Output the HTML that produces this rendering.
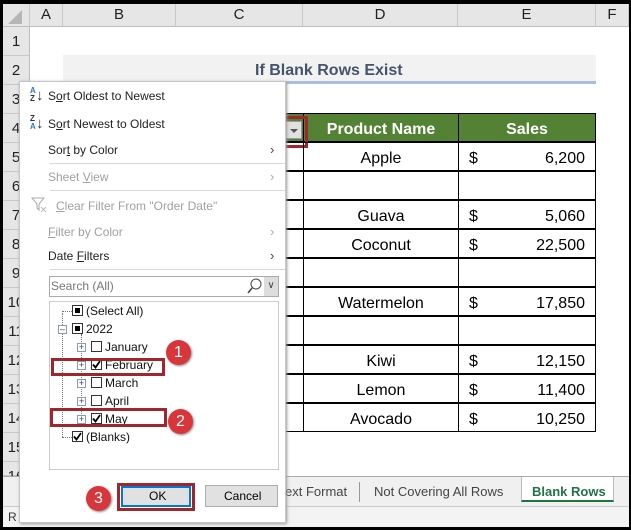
<!DOCTYPE html>
<html><head><style>
*{margin:0;padding:0;box-sizing:border-box}
body{width:631px;height:530px;background:#000;position:relative;overflow:hidden;font-family:"Liberation Sans",sans-serif}
.a{position:absolute}
.t{position:absolute;white-space:nowrap}
.hd{background:#e6e6e6;color:#222;font-size:15px;text-align:center;line-height:22px;top:4px;height:23px;border-right:1px solid #c8c8c8;border-bottom:1px solid #bdbdbd}
.rn{left:3px;width:27px;height:29px;background:#e6e6e6;border-bottom:1px solid #c8c8c8;border-right:1px solid #bdbdbd;font-size:15px;color:#222;text-align:center;line-height:29px}
.cell{position:absolute;height:29px;border:1px solid #000;font-size:16px;line-height:31px;color:#000}
.mi{position:absolute;left:48px;font-size:12px;color:#222}
.dis{color:#a0a0a0}
.arr{position:absolute;left:270px;font-size:13px;color:#444}
.sep{position:absolute;left:50px;width:235px;height:1px;background:#d8d8d8}
.li{position:absolute;font-size:12px;color:#111}
.cb{position:absolute;width:11px;height:11px;border:1px solid #333;background:#fff}
.fill::after{content:"";position:absolute;left:2px;top:2px;width:5px;height:5px;background:#000}
.cb svg{position:absolute;left:0;top:0}
.pl{position:absolute;width:9px;height:9px;border:1px solid #8a9ab5;background:#fff;font-size:9px;line-height:7px;text-align:center;color:#233e8b}
.red{position:absolute;border:3px solid #a0262b}
.badge{position:absolute;width:25px;height:25px;border-radius:50%;background:#d9363c;color:#fff;font-size:16px;text-align:center;line-height:25px;box-shadow:1px 1px 2px #888}
</style></head><body>
<div class="a" style="left:3px;top:4px;width:626px;height:523px;background:#fff"></div>
<div class="a hd" style="left:3px;width:27px"></div>
<div class="a" style="left:8px;top:10px;width:0;height:0;border-left:14px solid transparent;border-bottom:14px solid #b5b5b5"></div>
<div class="a hd" style="left:30px;width:33px">A</div>
<div class="a hd" style="left:63px;width:113px">B</div>
<div class="a hd" style="left:176px;width:127px">C</div>
<div class="a hd" style="left:303px;width:155px">D</div>
<div class="a hd" style="left:458px;width:138px">E</div>
<div class="a hd" style="left:596px;width:33px">F</div>
<div class="a rn" style="top:27px">1</div>
<div class="a rn" style="top:56px">2</div>
<div class="a rn" style="top:85px">3</div>
<div class="a rn" style="top:114px">4</div>
<div class="a rn" style="top:143px">5</div>
<div class="a rn" style="top:172px">6</div>
<div class="a rn" style="top:201px">7</div>
<div class="a rn" style="top:230px">8</div>
<div class="a rn" style="top:259px">9</div>
<div class="a rn" style="top:288px">10</div>
<div class="a rn" style="top:317px">11</div>
<div class="a rn" style="top:346px">12</div>
<div class="a rn" style="top:375px">13</div>
<div class="a rn" style="top:404px">14</div>
<div class="a rn" style="top:433px">15</div>
<div class="a rn" style="top:462px;height:14px">16</div>
<div class="a" style="left:63px;top:55px;width:533px;height:29px;background:#f2f2f2;border-bottom:3px solid #a9bde0"></div>
<div class="t" style="left:255px;top:62px;font-size:16px;font-weight:bold;color:#44546a">If Blank Rows Exist</div>
<div class="cell" style="left:303px;top:113px;width:156px;background:#548235;color:#fff;font-weight:bold;text-align:center">Product Name</div>
<div class="cell" style="left:458px;top:113px;width:138px;background:#548235;color:#fff;font-weight:bold;text-align:center">Sales</div>
<div class="cell" style="left:240px;top:113px;width:64px;background:#548235"></div>
<div class="a" style="left:284px;top:121px;width:18px;height:18px;background:#e1e1e1;border:1px solid #999"></div>
<div class="a" style="left:290px;top:129px;border-left:4px solid transparent;border-right:4px solid transparent;border-top:4px solid #555"></div>
<div class="red" style="left:280px;top:116px;width:28px;height:32px"></div>
<div class="cell" style="left:240px;top:142px;width:64px"></div>
<div class="cell" style="left:303px;top:142px;width:156px;text-align:center">Apple</div>
<div class="cell" style="left:458px;top:142px;width:138px;padding:0 10px"><span>$</span><span style="float:right">6,200</span></div>
<div class="cell" style="left:240px;top:171px;width:64px"></div>
<div class="cell" style="left:303px;top:171px;width:156px"></div>
<div class="cell" style="left:458px;top:171px;width:138px"></div>
<div class="cell" style="left:240px;top:200px;width:64px"></div>
<div class="cell" style="left:303px;top:200px;width:156px;text-align:center">Guava</div>
<div class="cell" style="left:458px;top:200px;width:138px;padding:0 10px"><span>$</span><span style="float:right">5,060</span></div>
<div class="cell" style="left:240px;top:229px;width:64px"></div>
<div class="cell" style="left:303px;top:229px;width:156px;text-align:center">Coconut</div>
<div class="cell" style="left:458px;top:229px;width:138px;padding:0 10px"><span>$</span><span style="float:right">22,500</span></div>
<div class="cell" style="left:240px;top:258px;width:64px"></div>
<div class="cell" style="left:303px;top:258px;width:156px"></div>
<div class="cell" style="left:458px;top:258px;width:138px"></div>
<div class="cell" style="left:240px;top:287px;width:64px"></div>
<div class="cell" style="left:303px;top:287px;width:156px;text-align:center">Watermelon</div>
<div class="cell" style="left:458px;top:287px;width:138px;padding:0 10px"><span>$</span><span style="float:right">17,850</span></div>
<div class="cell" style="left:240px;top:316px;width:64px"></div>
<div class="cell" style="left:303px;top:316px;width:156px"></div>
<div class="cell" style="left:458px;top:316px;width:138px"></div>
<div class="cell" style="left:240px;top:345px;width:64px"></div>
<div class="cell" style="left:303px;top:345px;width:156px;text-align:center">Kiwi</div>
<div class="cell" style="left:458px;top:345px;width:138px;padding:0 10px"><span>$</span><span style="float:right">12,150</span></div>
<div class="cell" style="left:240px;top:374px;width:64px"></div>
<div class="cell" style="left:303px;top:374px;width:156px;text-align:center">Lemon</div>
<div class="cell" style="left:458px;top:374px;width:138px;padding:0 10px"><span>$</span><span style="float:right">11,400</span></div>
<div class="cell" style="left:240px;top:403px;width:64px"></div>
<div class="cell" style="left:303px;top:403px;width:156px;text-align:center">Avocado</div>
<div class="cell" style="left:458px;top:403px;width:138px;padding:0 10px"><span>$</span><span style="float:right">10,250</span></div>
<div class="a" style="left:3px;top:476px;width:626px;height:30px;background:#f0f0f0;border-top:1px solid #c6c6c6"></div>
<div class="a" style="left:3px;top:476px;width:626px;height:1px;background:#aaa"></div>
<div class="t" style="left:285px;top:484px;font-size:13px;color:#444">ext Format</div>
<div class="a" style="left:359px;top:482px;width:1px;height:20px;background:#999"></div>
<div class="t" style="left:374px;top:484px;font-size:13px;color:#444">Not Covering All Rows</div>
<div class="a" style="left:521px;top:477px;width:93px;height:25px;background:#fff;border-bottom:2px solid #217346;border-left:1px solid #bbb;border-right:1px solid #bbb"></div>
<div class="t" style="left:532px;top:484px;font-size:13px;font-weight:bold;color:#217346">Blank Rows</div>
<div class="a" style="left:3px;top:506px;width:626px;height:21px;background:#f3f3f3;border-top:1px solid #ccc"></div>
<div class="t" style="left:8px;top:510px;font-size:12px;color:#333">R</div>
<div class="a" style="left:19px;top:81px;width:267px;height:442px;background:#fff;border:1px solid #c6c6c6;box-shadow:1px 1px 3px #999"></div>
<div class="t" style="left:30px;top:87px;font-size:8px;font-weight:bold;color:#2b79d0;line-height:8px">A<br><span style="color:#333">Z</span></div>
<div class="t" style="left:36px;top:87px;font-size:15px;color:#333">↓</div>
<div class="mi" style="top:89px">S<u>o</u>rt Oldest to Newest</div>
<div class="t" style="left:30px;top:115px;font-size:8px;font-weight:bold;color:#333;line-height:8px">Z<br><span style="color:#2b79d0">A</span></div>
<div class="t" style="left:36px;top:115px;font-size:15px;color:#333">↓</div>
<div class="mi" style="top:117px">S<u>o</u>rt Newest to Oldest</div>
<div class="mi" style="top:143px">Sor<u>t</u> by Color</div><div class="arr" style="top:142px">&#x203A;</div>
<div class="sep" style="top:163px"></div>
<div class="mi dis" style="top:170px">Sheet <u>V</u>iew</div><div class="arr dis" style="top:169px;color:#aaa">&#x203A;</div>
<div class="sep" style="top:190px"></div>
<svg class="a" style="left:31px;top:197px" width="16" height="16"><path d="M1 1h12l-5 6v6l-2-2V7z" fill="none" stroke="#aaa"/><path d="M10 10l5 5M15 10l-5 5" stroke="#bbb"/></svg>
<div class="mi dis" style="left:56px;top:199px"><u>C</u>lear Filter From "Order Date"</div>
<div class="mi dis" style="top:225px"><u>F</u>ilter by Color</div><div class="arr" style="top:224px;color:#aaa">&#x203A;</div>
<div class="mi" style="top:249px">Date <u>F</u>ilters</div><div class="arr" style="top:248px">&#x203A;</div>
<div class="sep" style="top:269px"></div>
<div class="a" style="left:49px;top:276px;width:230px;height:21px;border:1px solid #aaa"></div>
<div class="t" style="left:51px;top:279px;font-size:12px;color:#777">Search (All)</div>
<svg class="a" style="left:246px;top:277px" width="18" height="18"><circle cx="10" cy="7" r="5" fill="none" stroke="#444"/><path d="M6 11l-4 5" stroke="#444" stroke-width="1.5"/></svg>
<div class="a" style="left:264px;top:277px;width:14px;height:19px;background:#ddd;font-size:10px;text-align:center;line-height:18px;color:#444">&#x2228;</div>
<div class="a" style="left:49px;top:301px;width:230px;height:169px;border:1px solid #ccc"></div>
<div class="a" style="left:62px;top:313px;height:124px;border-left:1px dotted #777"></div>
<div class="a" style="left:81px;top:334px;height:88px;border-left:1px dotted #777"></div>
<div class="a" style="left:62px;top:311px;width:10px;border-top:1px dotted #777"></div>
<div class="a" style="left:62px;top:437px;width:10px;border-top:1px dotted #777"></div>
<div class="cb fill" style="left:72px;top:305px"></div><div class="li" style="left:86px;top:304px">(Select All)</div>
<div class="pl" style="left:58px;top:325px">&#8211;</div><div class="cb fill" style="left:72px;top:323px"></div><div class="li" style="left:86px;top:322px">2022</div>
<div class="pl" style="left:77px;top:343px">+</div><div class="cb" style="left:91px;top:341px"></div><div class="li" style="left:105px;top:340px">January</div>
<div class="pl" style="left:77px;top:361px">+</div><div class="cb" style="left:91px;top:359px"><svg width="9" height="9"><path d="M1 4.5l2.5 3L8 1" fill="none" stroke="#000" stroke-width="1.8"/></svg></div><div class="li" style="left:105px;top:358px">February</div>
<div class="pl" style="left:77px;top:379px">+</div><div class="cb" style="left:91px;top:377px"></div><div class="li" style="left:105px;top:376px">March</div>
<div class="pl" style="left:77px;top:397px">+</div><div class="cb" style="left:91px;top:395px"></div><div class="li" style="left:105px;top:394px">April</div>
<div class="pl" style="left:77px;top:415px">+</div><div class="cb" style="left:91px;top:413px"><svg width="9" height="9"><path d="M1 4.5l2.5 3L8 1" fill="none" stroke="#000" stroke-width="1.8"/></svg></div><div class="li" style="left:105px;top:412px">May</div>
<div class="cb" style="left:72px;top:431px"><svg width="9" height="9"><path d="M1 4.5l2.5 3L8 1" fill="none" stroke="#000" stroke-width="1.8"/></svg></div><div class="li" style="left:86px;top:430px">(Blanks)</div>
<div class="red" style="left:51px;top:358px;width:114px;height:18px"></div>
<div class="red" style="left:50px;top:408px;width:117px;height:19px"></div>
<div class="a" style="left:121px;top:486px;width:70px;height:21px;background:#e1e1e1;border:2px solid #0078d7"></div>
<div class="t" style="left:149px;top:489px;font-size:12px;color:#000">OK</div>
<div class="red" style="left:117px;top:483px;width:78px;height:28px"></div>
<div class="a" style="left:205px;top:485px;width:73px;height:22px;background:#e1e1e1;border:1px solid #adadad"></div>
<div class="t" style="left:224px;top:489px;font-size:12px;color:#000">Cancel</div>
<div class="badge" style="left:166px;top:340px">1</div>
<div class="badge" style="left:168px;top:409px">2</div>
<div class="badge" style="left:86px;top:486px">3</div>
</body></html>
